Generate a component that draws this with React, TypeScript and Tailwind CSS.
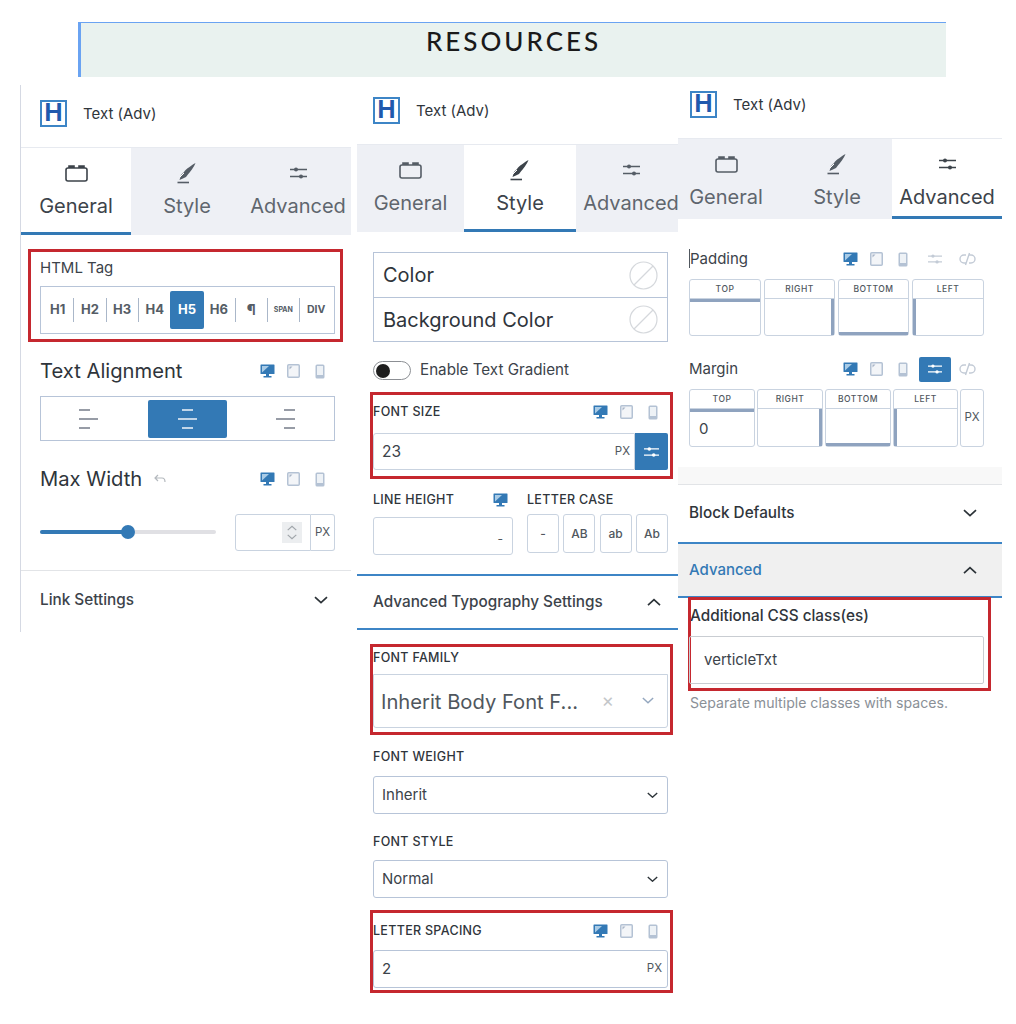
import type { ReactNode } from "react";

const BLUE = "#3379b5";

function DesktopIcon() {
  return (
    <svg width="15" height="14" viewBox="0 0 15 14" className="shrink-0">
      <rect x="0.5" y="0.5" width="14" height="9.5" fill={BLUE} rx="0.5" />
      <path d="M2 8.5 L2 2 L9 2 Z" fill="#a9cbe6" />
      <rect x="6" y="10" width="3" height="2.5" fill={BLUE} />
      <rect x="3.5" y="12" width="8" height="1.5" fill={BLUE} />
    </svg>
  );
}

function TabletIcon() {
  return (
    <svg width="13" height="14" viewBox="0 0 13 14" className="ml-[12px] shrink-0">
      <rect x="0.75" y="0.75" width="11.5" height="12.5" rx="1" fill="#f3f5f8" stroke="#b4c2d4" strokeWidth="1.5" />
      <path d="M2.5 2.5 H5.5 L2.5 5.5 Z" fill="#a9b6c7" />
    </svg>
  );
}

function PhoneIcon() {
  return (
    <svg width="10" height="15" viewBox="0 0 10 15" className="ml-[15px] shrink-0">
      <rect x="0.5" y="0.5" width="9" height="14" rx="1.5" fill="#b4c2d4" />
      <rect x="2" y="2" width="6" height="9" fill="#eef2f6" />
    </svg>
  );
}

function DeviceIcons({ className = "", only = false }: { className?: string; only?: boolean }) {
  return (
    <div className={`flex items-center ${className}`}>
      <DesktopIcon />
      {!only && <TabletIcon />}
      {!only && <PhoneIcon />}
    </div>
  );
}

function SlidersIcon({ color, width = 17 }: { color: string; width?: number }) {
  return (
    <svg width={width} height="14" viewBox="0 0 17 14" fill="none" stroke={color} strokeWidth="1.3">
      <path d="M0 3.5 H17 M0 10.5 H17" />
      <circle cx="6" cy="3.5" r="2" fill={color} stroke="none" />
      <circle cx="11" cy="10.5" r="2" fill={color} stroke="none" />
    </svg>
  );
}

function GeneralIcon({ color }: { color: string }) {
  return (
    <svg width="23" height="18" viewBox="0 0 23 18" fill="none" stroke={color} strokeWidth="1.6">
      <rect x="1" y="4" width="21" height="13" rx="2" />
      <path d="M4 4 V2 H9 V4 M14 4 V2 H19 V4" fill={color} />
    </svg>
  );
}

function StyleIcon({ color }: { color: string }) {
  return (
    <svg width="20" height="22" viewBox="0 0 20 22" fill="none">
      <path d="M18.5 1 C15 3 9 7 7 10 L4 13 C3.5 15 3 16 2.5 18 C5 17 7 16 9 15 L10.5 13 C13 10 17 5 18.5 1 Z" fill={color} />
      <path d="M3 15 L7 11" stroke="#ffffff" strokeWidth="1" />
      <path d="M0.5 20.5 H12" stroke={color} strokeWidth="1.6" />
    </svg>
  );
}

function Chevron({ up = false, color = "#2c3338", size = 14 }: { up?: boolean; color?: string; size?: number }) {
  return (
    <svg width={size} height={size * 0.6} viewBox="0 0 14 8" fill="none" stroke={color} strokeWidth="1.7">
      <path d={up ? "M1 7 L7 1.5 L13 7" : "M1 1 L7 6.5 L13 1"} />
    </svg>
  );
}

function AlignIcon({ side, color }: { side: "left" | "center" | "right"; color: string }) {
  const x = side === "left" ? 0 : side === "center" ? 4 : 8;
  return (
    <svg width="20" height="20" viewBox="0 0 20 20" stroke={color} strokeWidth="1.4">
      <path d={`M${x} 1 h11`} />
      <path d="M0 10 h19" />
      <path d={`M${x} 19 h11`} />
    </svg>
  );
}

function LinkOff() {
  return (
    <svg width="17" height="14" viewBox="0 0 17 14" fill="none" stroke="#c3cbd6" strokeWidth="1.4">
      <path d="M7 3 H5 a4 4 0 0 0 0 8 H7 M10 3 H12 a4 4 0 0 1 0 8 H10 M10.5 1 L6.5 13" />
    </svg>
  );
}

function Logo() {
  return (
    <div className="flex h-[27px] w-[27px] shrink-0 items-center justify-center border-2 border-[#3d85c6] bg-white text-[24px] leading-none font-bold text-[#2059ad]">
      H
    </div>
  );
}

function PanelHeader({ className }: { className: string }) {
  return (
    <div className={`flex items-center gap-[16px] text-[15px] text-[#2f353b] ${className}`}>
      <Logo />
      <span className="pt-[2px]">Text (Adv)</span>
    </div>
  );
}

const TAB_NAMES = ["General", "Style", "Advanced"];

function Tabs({ active, widths, height, styleOffset = 0 }: { active: number; widths: number[]; height: number; styleOffset?: number }) {
  return (
    <div className="flex overflow-hidden border-t border-[#e7eaf0] bg-[#eef0f5]" style={{ height }}>
      {TAB_NAMES.map((name, i) => {
        const on = i === active;
        const color = on ? "#3c434a" : "#555d66";
        return (
          <div
            key={name}
            style={{ width: widths[i], paddingLeft: i === 1 ? styleOffset : 0 }}
            className={`flex shrink-0 flex-col items-center pt-[13px] ${on ? "border-b-[3px] border-[#3379b5] bg-white" : ""}`}
          >
            <div className="flex h-[24px] items-center">
              {i === 0 && <GeneralIcon color={color} />}
              {i === 1 && <StyleIcon color={color} />}
              {i === 2 && <SlidersIcon color={color} />}
            </div>
            <span className={`mt-[8px] text-[20px] leading-[26px] ${on ? "text-[#3c434a]" : "text-[#5f666e]"}`}>{name}</span>
          </div>
        );
      })}
    </div>
  );
}

function RedBox({ className, children }: { className: string; children: ReactNode }) {
  return <div className={`border-[3px] border-[#c5282f] ${className}`}>{children}</div>;
}

function SmallLabel({ children, className = "" }: { children: ReactNode; className?: string }) {
  return <span className={`text-[12.5px] leading-[16px] font-medium tracking-[0.3px] text-[#2f353b] ${className}`}>{children}</span>;
}

const TAGS = [
  { tag: "H1", divider: true },
  { tag: "H2", divider: true },
  { tag: "H3", divider: true },
  { tag: "H4", divider: false },
  { tag: "H5", divider: false },
  { tag: "H6", divider: true },
  { tag: "¶", divider: true },
  { tag: "SPAN", divider: true },
  { tag: "DIV", divider: false },
];

function TagRow() {
  return (
    <div className="mt-[8px] flex h-[48px] w-[295px] items-center border border-[#b7c4d8] px-[1px]">
      {TAGS.map(({ tag, divider }) => {
        const on = tag === "H5";
        const size = tag === "SPAN" ? "text-[7px]" : tag === "DIV" ? "text-[10.5px]" : tag === "¶" ? "text-[15px]" : "text-[13px]";
        return (
          <div key={tag} className={`flex h-[38px] shrink-0 items-center ${on ? "mx-[-1px] w-[34.25px] rounded-[2px] bg-[#3379b5]" : "w-[32.25px]"}`}>
            <span className={`flex-1 text-center font-bold ${size} ${on ? "text-white" : "text-[#555d66]"}`}>{tag}</span>
            {divider && <span className="h-[24px] w-px bg-[#aab7c9]" />}
          </div>
        );
      })}
    </div>
  );
}

function LabelRow({ children, className = "" }: { children: ReactNode; className?: string }) {
  return <div className={`flex items-center justify-between text-[20.2px] leading-[26px] text-[#2f353b] ${className}`}>{children}</div>;
}

function GeneralPanel() {
  return (
    <div className="absolute top-[85px] left-[20px] h-[547px] w-[331px] border-l border-[#d5d9e3]">
      <PanelHeader className="h-[62px] pb-[6px] pl-[19px]" />
      <Tabs active={0} widths={[110, 112, 110]} height={88} />

      <RedBox className="mt-[14px] ml-[7px] h-[93px] w-[315px] pt-[6px] pl-[9px]">
        <div className="text-[15px] leading-[20px] text-[#3c434a]">HTML Tag</div>
        <TagRow />
      </RedBox>

      <div className="mt-[16px] w-[295px] translate-x-[19px]">
        <LabelRow>
          <span>Text Alignment</span>
          <DeviceIcons className="mr-[10px]" />
        </LabelRow>
        <div className="mt-[12px] flex h-[45px] items-center justify-between border border-[#b7c4d8] px-[38px]">
          <AlignIcon side="left" color="#6b7280" />
          <div className="flex h-[38px] w-[79px] items-center justify-center rounded-[2px] bg-[#3379b5]">
            <AlignIcon side="center" color="#ffffff" />
          </div>
          <AlignIcon side="right" color="#6b7280" />
        </div>

        <LabelRow className="mt-[25px]">
          <span className="flex items-center gap-[12px]">
            Max Width
            <svg width="12" height="10" viewBox="0 0 12 10" fill="none" stroke="#b4b9be" strokeWidth="1.2">
              <path d="M4 1 L1 4 L4 7 M1 4 H8 Q11 4 11 8" />
            </svg>
          </span>
          <DeviceIcons className="mr-[10px]" />
        </LabelRow>

        <div className="mt-[22px] flex h-[37px] items-center">
          <div className="relative mb-[2px] h-[4px] w-[176px] rounded-full bg-[#e0e0e4]">
            <div className="h-full w-[88px] rounded-full bg-[#3379b5]" />
            <div className="absolute top-[-5px] left-[81px] h-[14px] w-[14px] rounded-full bg-[#3379b5]" />
          </div>
          <div className="ml-[19px] flex h-[37px] w-[76px] items-center justify-end rounded-l-[3px] border border-[#c9d3e0] pr-[8px]">
            <div className="flex h-[21px] w-[20px] flex-col items-center justify-center gap-[3px] bg-[#eceef0]">
              <Chevron up color="#a0a5aa" size={10} />
              <Chevron color="#a0a5aa" size={10} />
            </div>
          </div>
          <div className="flex h-[37px] w-[24px] items-center justify-center rounded-r-[3px] border border-l-0 border-[#c9d3e0] text-[11.5px] text-[#50575e]">PX</div>
        </div>
      </div>

      <div className="mt-[19px] border-t border-[#e2e4e7]" />
      <div className="flex h-[58px] items-center justify-between pt-[1px] pr-[23px] pl-[19px] text-[15.3px] font-medium text-[#3c434a]">
        <span>Link Settings</span>
        <Chevron />
      </div>
    </div>
  );
}

function NoColorRow({ label, className }: { label: string; className: string }) {
  return (
    <div className={`flex items-center justify-between px-[9px] text-[20px] text-[#2f353b] ${className}`}>
      <span>{label}</span>
      <svg width="29" height="29" viewBox="0 0 29 29" fill="none" stroke="#d5d8dc" strokeWidth="1.2">
        <circle cx="14.5" cy="14.5" r="13.5" />
        <path d="M5 24 L24 5" />
      </svg>
    </div>
  );
}

function SelectBox({ label, className = "" }: { label: string; className?: string }) {
  return (
    <div className={`flex h-[38px] w-[295px] items-center justify-between rounded-[3px] border border-[#b7c4d8] pr-[9px] pl-[8px] text-[15px] text-[#3c434a] ${className}`}>
      <span>{label}</span>
      <Chevron size={11} />
    </div>
  );
}

const CASES = ["-", "AB", "ab", "Ab"];

function StylePanel() {
  return (
    <div className="absolute top-[85px] left-[357px] w-[321px]">
      <PanelHeader className="h-[59px] pb-[9px] pl-[16px]" />
      <Tabs active={1} widths={[107, 112, 110]} height={88} />

      <div className="mt-[20px] ml-[16px] w-[295px] border border-[#b7c4d8]">
        <NoColorRow label="Color" className="h-[45px] border-b border-[#b7c4d8]" />
        <NoColorRow label="Background Color" className="h-[43px]" />
      </div>

      <div className="mt-[19px] ml-[16px] flex h-[19px] items-center gap-[9px] text-[15.2px] text-[#3c434a]">
        <div className="flex h-[19px] w-[38px] items-center rounded-full border border-[#8c8f94] pl-[2px]">
          <div className="h-[14px] w-[14px] rounded-full bg-[#1e1e1e]" />
        </div>
        <span className="mb-[1px]">Enable Text Gradient</span>
      </div>

      <RedBox className="mt-[12px] ml-[13px] h-[87px] w-[303px] pt-[9px]">
        <div className="flex h-[16px] items-center justify-between pr-[12px]">
          <SmallLabel>FONT SIZE</SmallLabel>
          <DeviceIcons />
        </div>
        <div className="mt-[13px] flex h-[37px] w-[295px]">
          <div className="flex flex-1 items-center justify-between rounded-l-[3px] border border-[#c9d3e0] pr-[4px] pl-[8px] text-[15.5px] text-[#3c434a]">
            <span>23</span>
            <span className="text-[11.5px] text-[#50575e]">PX</span>
          </div>
          <div className="flex w-[33px] items-center justify-center rounded-r-[2px] bg-[#3379b5]">
            <SlidersIcon color="#ffffff" width={15} />
          </div>
        </div>
      </RedBox>

      <div className="mt-[13px] ml-[16px] flex w-[295px] justify-between">
        <div className="w-[140px]">
          <div className="flex h-[16px] items-center justify-between pr-[5px]">
            <SmallLabel>LINE HEIGHT</SmallLabel>
            <DeviceIcons only />
          </div>
          <div className="mt-[9px] flex h-[38px] items-end justify-end rounded-[3px] border border-[#c9d3e0] pr-[9px] pb-[9px] text-[12px] leading-none text-[#50575e]">-</div>
        </div>
        <div className="w-[141px]">
          <div className="flex h-[16px] items-center">
            <SmallLabel>LETTER CASE</SmallLabel>
          </div>
          <div className="mt-[6px] flex justify-between">
            {CASES.map((c) => (
              <div key={c} className="flex h-[39px] w-[32px] items-center justify-center rounded-[3px] border border-[#c9d3e0] text-[12px] font-medium text-[#50575e]">
                {c}
              </div>
            ))}
          </div>
        </div>
      </div>

      <div className="mt-[19px] flex h-[56px] items-center justify-between border-y-2 border-[#3d85c6] pt-[1px] pr-[17px] pl-[16px] text-[15.3px] font-medium text-[#3c434a]">
        <span>Advanced Typography Settings</span>
        <Chevron up />
      </div>

      <RedBox className="mt-[14px] ml-[13px] h-[91px] w-[303px] pt-[3px]">
        <div className="flex h-[16px] items-center">
          <SmallLabel>FONT FAMILY</SmallLabel>
        </div>
        <div className="mt-[8px] flex h-[54px] w-[295px] items-center justify-between rounded-b-[3px] border border-[#c9d3e0] pr-[13px] pl-[7px] text-[20.2px] text-[#50575e]">
          <span className="pt-[3px]">Inherit Body Font F...</span>
          <span className="flex items-center gap-[28px]">
            <span className="text-[19px] text-[#c4c7ca]">×</span>
            <Chevron color="#94a7bf" size={12} />
          </span>
        </div>
      </RedBox>

      <div className="mt-[14px] ml-[16px]">
        <div className="flex h-[16px] items-center">
          <SmallLabel>FONT WEIGHT</SmallLabel>
        </div>
        <SelectBox label="Inherit" className="mt-[11px]" />
        <div className="mt-[20px] flex h-[16px] items-center">
          <SmallLabel>FONT STYLE</SmallLabel>
        </div>
        <SelectBox label="Normal" className="mt-[10px]" />
      </div>

      <RedBox className="mt-[12px] ml-[13px] h-[83px] w-[303px] pt-[10px]">
        <div className="flex h-[16px] items-center justify-between pr-[12px]">
          <SmallLabel>LETTER SPACING</SmallLabel>
          <DeviceIcons />
        </div>
        <div className="mt-[11px] flex h-[38px] w-[295px] items-center justify-between rounded-[3px] border border-[#b7c4d8] pr-[5px] pl-[8px] text-[15px] text-[#3c434a]">
          <span>2</span>
          <span className="text-[11.5px] text-[#50575e]">PX</span>
        </div>
      </RedBox>
    </div>
  );
}

function SideBox({ label, width, height, side, value }: { label: string; width: number; height: number; side: "top" | "right" | "bottom" | "left"; value?: string }) {
  const bar = {
    top: "border-t-[3px]",
    right: "border-r-[3px]",
    bottom: "border-b-[3px]",
    left: "border-l-[3px]",
  }[side];
  return (
    <div style={{ width, height }} className="flex shrink-0 flex-col rounded-[3px] border border-[#c9d3e0]">
      <div className="flex h-[19px] shrink-0 items-center justify-center border-b border-[#c9d3e0] text-[8.5px] font-medium tracking-[0.5px] text-[#50575e]">{label}</div>
      <div className={`flex flex-1 items-center border-[#8fa3bf] pl-[9px] text-[15px] text-[#3c434a] ${bar}`}>{value}</div>
    </div>
  );
}

function SpacingHeader({ label, active, caret }: { label: string; active?: boolean; caret?: boolean }) {
  return (
    <div className="flex h-[20px] items-center text-[15px] text-[#3c434a]">
      <span className="w-[154px]">
        <span className={caret ? "border-l border-[#50575e]" : ""}>{label}</span>
      </span>
      <DeviceIcons />
      <div className={`ml-[11px] flex h-[25px] w-[32px] items-center justify-center rounded-[2px] ${active ? "bg-[#3379b5]" : ""}`}>
        <SlidersIcon color={active ? "#ffffff" : "#c3cbd6"} width={14} />
      </div>
      <div className="ml-[8px]">
        <LinkOff />
      </div>
    </div>
  );
}

function AdvancedPanel() {
  return (
    <div className="absolute top-[78px] left-[678px] w-[324px]">
      <PanelHeader className="h-[60px] pb-[8px] pl-[12px]" />
      <Tabs active={2} widths={[96, 118, 110]} height={81} styleOffset={8} />

      <div className="mt-[30px] pl-[11px]">
        <SpacingHeader label="Padding" caret />
        <div className="mt-[10px] flex gap-[3px]">
          <SideBox label="TOP" width={72} height={57} side="top" />
          <SideBox label="RIGHT" width={71} height={57} side="right" />
          <SideBox label="BOTTOM" width={71} height={57} side="bottom" />
          <SideBox label="LEFT" width={72} height={57} side="left" />
        </div>

        <div className="mt-[23px]">
          <SpacingHeader label="Margin" active />
        </div>
        <div className="mt-[10px] flex gap-[2px]">
          <SideBox label="TOP" width={66} height={58} side="top" value="0" />
          <SideBox label="RIGHT" width={66} height={58} side="right" />
          <SideBox label="BOTTOM" width={66} height={58} side="bottom" />
          <SideBox label="LEFT" width={65} height={58} side="left" />
          <div className="flex h-[58px] w-[24px] shrink-0 items-start justify-center rounded-[3px] border border-[#c9d3e0] pt-[19px] text-[11.5px] text-[#50575e]">PX</div>
        </div>
      </div>

      <div className="mt-[20px] h-[18px] border-b border-[#e2e4e7] bg-[#f8f8f8]" />
      <div className="flex h-[57px] items-center justify-between pr-[25px] pl-[11px] text-[15.3px] font-medium text-[#2f353b]">
        <span>Block Defaults</span>
        <Chevron />
      </div>
      <div className="flex h-[56px] items-center justify-between border-y-2 border-[#3d85c6] bg-[#f0f0f0] pr-[25px] pl-[11px] text-[15px] font-medium text-[#3379b5]">
        <span>Advanced</span>
        <Chevron up />
      </div>

      <RedBox className="mt-[-1px] ml-[10px] h-[94px] w-[303px] pt-[6px]">
        <div className="ml-[-1px] text-[15.3px] leading-[20px] font-medium text-[#2f353b]">Additional CSS class(es)</div>
        <div className="mt-[10px] ml-[-2px] flex h-[48px] w-[295px] items-center rounded-[2px] border border-[#c9cdd2] pl-[14px] text-[15px] text-[#3c434a]">verticleTxt</div>
      </RedBox>
      <div className="mt-[4px] ml-[12px] text-[14.1px] leading-[16px] text-[#8a9097]">Separate multiple classes with spaces.</div>
    </div>
  );
}

export default function App() {
  return (
    <div className="relative h-[1024px] w-[1016px] overflow-hidden bg-white [font-family:Inter,'Liberation_Sans',sans-serif]">
      <div className="absolute top-[22px] left-[78px] flex h-[55px] w-[868px] justify-center border-t border-l-[3px] border-[#6aa3f2] bg-[#e9f2ef] pt-[2px] text-[26px] leading-[32px] font-medium tracking-[3px] text-[#1a1a1a] [font-family:Lato,sans-serif]">
        RESOURCES
      </div>
      <GeneralPanel />
      <StylePanel />
      <AdvancedPanel />
    </div>
  );
}
